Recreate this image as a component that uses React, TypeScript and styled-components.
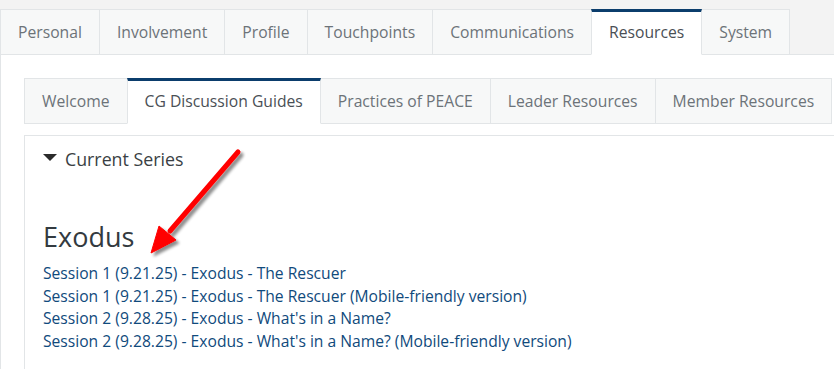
import React from 'react';
import styled, { createGlobalStyle } from 'styled-components';

const GlobalStyle = createGlobalStyle`
  html, body {
    margin: 0;
    padding: 0;
    background: #ffffff;
    font-family: 'Open Sans', 'Noto Sans', sans-serif;
    overflow: hidden;
  }
`;

const topTabs = ['Personal', 'Involvement', 'Profile', 'Touchpoints', 'Communications', 'Resources', 'System'];
const subTabs = ['Welcome', 'CG Discussion Guides', 'Practices of PEACE', 'Leader Resources', 'Member Resources'];
const sessions = [
  'Session 1 (9.21.25) - Exodus - The Rescuer',
  'Session 1 (9.21.25) - Exodus - The Rescuer (Mobile-friendly version)',
  "Session 2 (9.28.25) - Exodus - What's in a Name?",
  "Session 2 (9.28.25) - Exodus - What's in a Name? (Mobile-friendly version)",
];

const App: React.FC = () => {
  return (
    <Page>
      <GlobalStyle />
      <TopBar>
        {topTabs.map((t) => (
          <Tab key={t} active={t === 'Resources'}>
            {t}
          </Tab>
        ))}
      </TopBar>
      <Content>
        <SubBar>
          {subTabs.map((t) => (
            <Tab key={t} active={t === 'CG Discussion Guides'}>
              {t}
            </Tab>
          ))}
        </SubBar>
        <Panel>
          <Summary>
            <Caret />
            Current Series
          </Summary>
          <Heading>Exodus</Heading>
          <LinkList>
            {sessions.map((s) => (
              <SessionLink key={s} href="#">
                {s}
              </SessionLink>
            ))}
          </LinkList>
        </Panel>
      </Content>
      <Arrow width="120" height="130" viewBox="0 0 120 130">
        <defs>
          <filter id="shadow" x="-20%" y="-20%" width="140%" height="140%">
            <feGaussianBlur in="SourceAlpha" stdDeviation="1.5" />
            <feOffset dx="3" dy="3" result="blur" />
            <feComponentTransfer>
              <feFuncA type="linear" slope="0.45" />
            </feComponentTransfer>
            <feMerge>
              <feMergeNode />
              <feMergeNode in="SourceGraphic" />
            </feMerge>
          </filter>
        </defs>
        <g filter="url(#shadow)" fill="#ff0000" stroke="#ff0000">
          <line x1="98" y1="12" x2="30" y2="91" strokeWidth="5" strokeLinecap="round" />
          <polygon points="11,113 19,86 36,100" strokeWidth="1" strokeLinejoin="round" />
        </g>
      </Arrow>
    </Page>
  );
};

const Page = styled.div`
  position: relative;
  width: 834px;
  height: 369px;
  overflow: hidden;
  background: #f3f3f3;
  padding-top: 9px;
  box-sizing: border-box;
`;

const TopBar = styled.div`
  display: flex;
  height: 46px;
`;

interface TabProps {
  active?: boolean;
}

const Tab = styled.div<TabProps>`
  display: flex;
  align-items: center;
  box-sizing: border-box;
  height: 46px;
  padding: 0 17px;
  padding-bottom: ${(props) => (props.active ? '2px' : '0')};
  margin-right: -1px;
  font-size: 15.7px;
  white-space: nowrap;
  color: ${(props) => (props.active ? '#4a4f55' : '#6c7378')};
  background: ${(props) => (props.active ? '#ffffff' : '#f7f8f8')};
  border: 1px solid #e2e5e7;
  border-top: ${(props) => (props.active ? '3px solid #0b3d6c' : '1px solid #e2e5e7')};
  border-bottom: ${(props) => (props.active ? '1px solid #ffffff' : '1px solid #e2e5e7')};
  position: relative;
  z-index: ${(props) => (props.active ? 1 : 0)};
`;

const Content = styled.div`
  background: #ffffff;
  border-left: 1px solid #e2e5e7;
  border-top: 1px solid #e2e5e7;
  margin-top: -1px;
  padding: 23px 0 0 23px;
  height: 400px;
`;

const SubBar = styled.div`
  display: flex;
`;

const Panel = styled.div`
  margin-top: 11px;
  margin-right: -40px;
  border: 1px solid #e2e5e7;
  padding: 11px 18px 20px 18px;
`;

const Summary = styled.div`
  display: flex;
  align-items: center;
  font-size: 17.8px;
  line-height: 24px;
  color: #3a3f44;
`;

const Caret = styled.span`
  width: 0;
  height: 0;
  border-left: 7px solid transparent;
  border-right: 7px solid transparent;
  border-top: 7px solid #2b2b2b;
  margin-right: 8px;
  margin-top: -4px;
`;

const Heading = styled.h2`
  margin: 49px 0 8px 0;
  font-size: 27px;
  line-height: 34px;
  font-weight: 400;
  color: #333a40;
`;

const LinkList = styled.div`
  display: flex;
  flex-direction: column;
`;

const SessionLink = styled.a`
  font-size: 15.65px;
  line-height: 22.7px;
  color: #104a7c;
  text-decoration: none;
`;

const Arrow = styled.svg`
  position: absolute;
  left: 140px;
  top: 140px;
  pointer-events: none;
`;

export default App;
